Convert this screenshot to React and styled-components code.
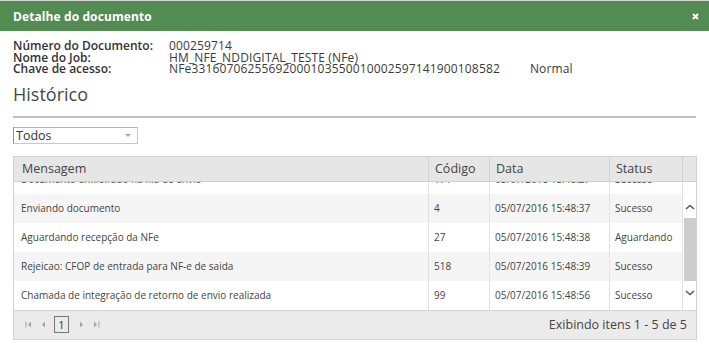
import React, { useLayoutEffect, useRef } from "react";
import styled, { createGlobalStyle } from "styled-components";

const Global = createGlobalStyle`
  html, body { margin: 0; padding: 0; background: #fff; }
  body { font-family: "Open Sans", "DejaVu Sans", sans-serif; color: #333; }
`;

const Dialog = styled.div`
  width: 709px;
  height: 347px;
  background: #fff;
  border-top: 1px solid #d6d6d6;
  box-sizing: border-box;
  overflow: hidden;
`;

const TitleBar = styled.div`
  height: 30px;
  background: #528c52;
  display: flex;
  align-items: center;
  justify-content: space-between;
  padding: 0 10px 0 13px;
`;

const Title = styled.span`
  color: #fff;
  font-size: 12px;
  font-weight: 700;
  letter-spacing: 0.1px;
`;

const CloseButton = styled.span`
  display: flex;
  width: 7px;
  height: 7px;
  margin-top: 1px;
`;

const Content = styled.div`
  padding: 9px 13px 0 13px;
`;

const InfoList = styled.div`
  display: grid;
  grid-template-columns: 156px auto;
  font-size: 12px;
  line-height: 11.6px;
`;

const Label = styled.span`
  font-weight: 600;
  color: #333;
`;

const Value = styled.span`
  color: #3a3a3a;
  letter-spacing: 0.15px;
`;

const Tag = styled.span`
  margin-left: 30px;
`;

const SectionTitle = styled.h2`
  margin: 8px 0 0 0;
  font-size: 18px;
  line-height: 22px;
  font-weight: 400;
  color: #484848;
  padding-bottom: 11px;
  border-bottom: 2px solid #c2c2c2;
`;

const Select = styled.div`
  margin-top: 9px;
  width: 125px;
  height: 17px;
  box-sizing: border-box;
  border: 1px solid #c9c9c9;
  border-left-color: #8e8e8e;
  border-top-color: #b5b5b5;
  display: flex;
  align-items: center;
  justify-content: space-between;
  padding: 0 6px 0 2px;
  font-size: 12.5px;
  color: #333;
`;

const Arrow = styled.span`
  width: 0;
  height: 0;
  border-left: 3px solid transparent;
  border-right: 3px solid transparent;
  border-top: 3px solid #aaa;
`;

const Grid = styled.div`
  margin-top: 12px;
  width: 684px;
  border: 1px solid #d3d3d3;
  box-sizing: border-box;
`;

const COLS = "414px 61px 120px 73px 14px";

const HeaderRow = styled.div`
  display: grid;
  grid-template-columns: ${COLS};
  height: 24px;
  background: #e6e6e6;
  border-bottom: 1px solid #cfcfcf;
`;

const HeaderCell = styled.div`
  display: flex;
  align-items: center;
  padding-left: ${(p) => (p.$first ? 8 : 6)}px;
  border-left: ${(p) => (p.$first ? "none" : "1px solid #d2d2d2")};
  font-size: 12.5px;
  color: #444;
`;

const Body = styled.div`
  display: flex;
  height: 128px;
`;

const Rows = styled.div`
  flex: 1;
  overflow: hidden;
`;

const Row = styled.div`
  display: grid;
  grid-template-columns: 414px 61px 120px 73px;
  height: 29px;
  background: ${(p) => (p.$alt ? "#f5f5f5" : "#fff")};
`;

const Cell = styled.div`
  display: flex;
  align-items: center;
  padding-left: ${(p) => (p.$first ? 7 : 5)}px;
  border-left: ${(p) => (p.$first ? "none" : "1px solid #e2e2e2")};
  font-size: 10px;
  color: #444;
  white-space: nowrap;
`;

const Scrollbar = styled.div`
  width: 14px;
  border-left: 1px solid #e2e2e2;
  display: flex;
  flex-direction: column;
  align-items: center;
  padding-top: 17px;
  box-sizing: border-box;
`;

const ScrollArrow = styled.span`
  display: flex;
  height: 16px;
  align-items: center;
  justify-content: center;
`;

const Thumb = styled.div`
  width: 12px;
  height: 63px;
  margin: 3px 0 4px;
  background: #cdcdcd;
`;

const Pager = styled.div`
  height: 28px;
  border-top: 1px solid #d3d3d3;
  background: #ebebeb;
  display: flex;
  align-items: center;
  justify-content: space-between;
  padding: 0 9px 0 7px;
`;

const PagerNav = styled.div`
  display: flex;
  align-items: center;
`;

const NavIcon = styled.span`
  display: flex;
  width: 15px;
  justify-content: center;
`;

const PageNumber = styled.span`
  width: 15px;
  height: 17px;
  box-sizing: border-box;
  border: 1px solid #777;
  display: flex;
  align-items: center;
  justify-content: center;
  font-size: 11px;
  color: #333;
  margin: 0 5px 0 3px;
`;

const PagerInfo = styled.span`
  font-size: 12.5px;
  color: #444;
`;

const Tri = ({ dir = "left", bar = false }) => (
  <svg width="7" height="7" viewBox="0 0 7 7">
    {dir === "left" ? (
      <>
        {bar && <rect x="0.5" y="0.5" width="1" height="6" fill="#a3a3a3" />}
        <polygon points={bar ? "6,0.5 3,3.5 6,6.5" : "5,0.5 2,3.5 5,6.5"} fill="#a3a3a3" />
      </>
    ) : (
      <>
        <polygon points={bar ? "1,0.5 4,3.5 1,6.5" : "2,0.5 5,3.5 2,6.5"} fill="#a3a3a3" />
        {bar && <rect x="5.5" y="0.5" width="1" height="6" fill="#a3a3a3" />}
      </>
    )}
  </svg>
);

const Chevron = ({ up }) => (
  <svg width="10" height="6" viewBox="0 0 10 6">
    <polyline
      points={up ? "1,5 5,1.5 9,5" : "1,1 5,4.5 9,1"}
      fill="none"
      stroke="#5a5a5a"
      strokeWidth="1.6"
    />
  </svg>
);

const rows = [
  ["Documento enfileirado na fila de envio", "171", "05/07/2016 15:48:27", "Sucesso"],
  ["Enviando documento", "4", "05/07/2016 15:48:37", "Sucesso"],
  ["Aguardando recepção da NFe", "27", "05/07/2016 15:48:38", "Aguardando"],
  ["Rejeicao: CFOP de entrada para NF-e de saida", "518", "05/07/2016 15:48:39", "Sucesso"],
  ["Chamada de integração de retorno de envio realizada", "99", "05/07/2016 15:48:56", "Sucesso"],
];

export default function App() {
  const rowsRef = useRef(null);
  useLayoutEffect(() => {
    if (rowsRef.current) rowsRef.current.scrollTop = rowsRef.current.scrollHeight;
  }, []);

  return (
    <>
      <Global />
      <Dialog>
        <TitleBar>
          <Title>Detalhe do documento</Title>
          <CloseButton>
            <svg width="7" height="7" viewBox="0 0 7 7">
              <path d="M1 1 L6 6 M6 1 L1 6" stroke="#fff" strokeWidth="2" />
            </svg>
          </CloseButton>
        </TitleBar>
        <Content>
          <InfoList>
            <Label>Número do Documento:</Label>
            <Value>000259714</Value>
            <Label>Nome do Job:</Label>
            <Value>HM_NFE_NDDIGITAL_TESTE (NFe)</Value>
            <Label>Chave de acesso:</Label>
            <Value>
              NFe33160706255692000103550010002597141900108582
              <Tag>Normal</Tag>
            </Value>
          </InfoList>
          <SectionTitle>Histórico</SectionTitle>
          <Select>
            Todos
            <Arrow />
          </Select>
          <Grid>
            <HeaderRow>
              <HeaderCell $first>Mensagem</HeaderCell>
              <HeaderCell>Código</HeaderCell>
              <HeaderCell>Data</HeaderCell>
              <HeaderCell>Status</HeaderCell>
              <HeaderCell />
            </HeaderRow>
            <Body>
              <Rows ref={rowsRef}>
                {rows.map((r, i) => (
                  <Row key={i} $alt={i % 2 === 1}>
                    <Cell $first>{r[0]}</Cell>
                    <Cell>{r[1]}</Cell>
                    <Cell>{r[2]}</Cell>
                    <Cell>{r[3]}</Cell>
                  </Row>
                ))}
              </Rows>
              <Scrollbar>
                <ScrollArrow>
                  <Chevron up />
                </ScrollArrow>
                <Thumb />
                <ScrollArrow>
                  <Chevron />
                </ScrollArrow>
              </Scrollbar>
            </Body>
            <Pager>
              <PagerNav>
                <NavIcon><Tri dir="left" bar /></NavIcon>
                <NavIcon><Tri dir="left" /></NavIcon>
                <PageNumber>1</PageNumber>
                <NavIcon><Tri dir="right" /></NavIcon>
                <NavIcon><Tri dir="right" bar /></NavIcon>
              </PagerNav>
              <PagerInfo>Exibindo itens 1 - 5 de 5</PagerInfo>
            </Pager>
          </Grid>
        </Content>
      </Dialog>
    </>
  );
}
